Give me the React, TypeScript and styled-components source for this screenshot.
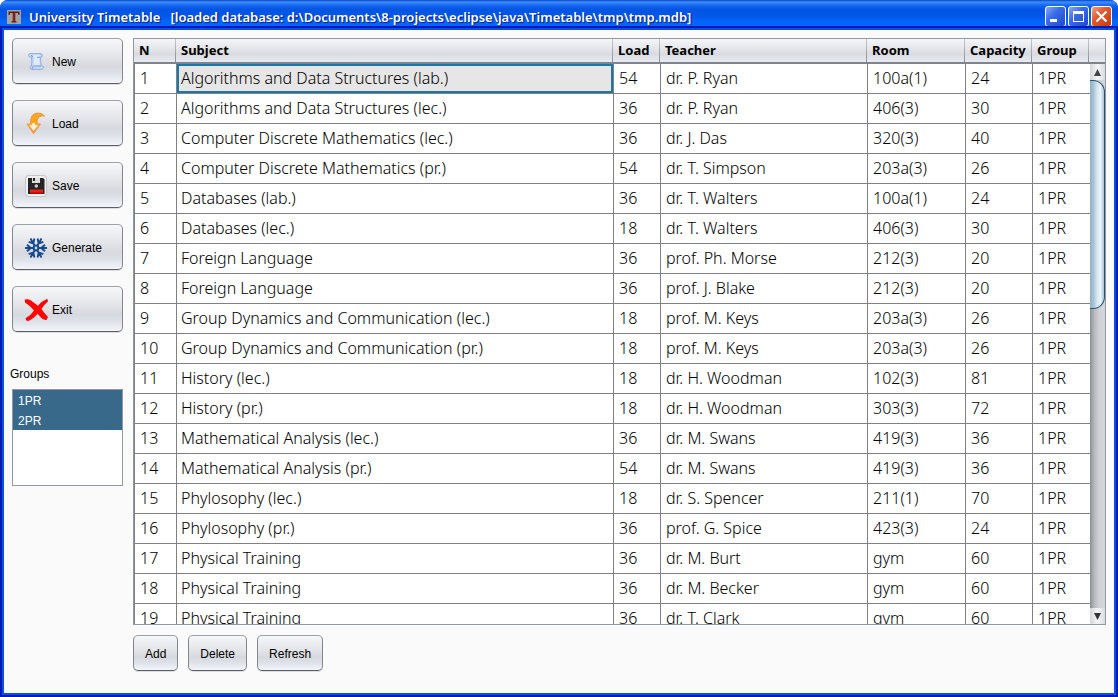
import React from "react";
import styled, { createGlobalStyle, css } from "styled-components";

const GlobalStyle = createGlobalStyle`
  * { box-sizing: border-box; }
  body { margin: 0; background: #fff; }
  button, select { font: inherit; color: inherit; }
`;

const uiFont = `"Liberation Sans", Arial, sans-serif`;
const tableFont = `"Noto Sans", Tahoma, sans-serif`;

const Window = styled.div`
  display: flex;
  flex-direction: column;
  height: 100vh;
  min-height: 560px;
  overflow: hidden;
  border-radius: 8px 8px 0 0;
  background: #0a41dc;
  font: 12px/16px ${uiFont};
  color: #000;
`;

const TitleBar = styled.header`
  display: flex;
  align-items: center;
  flex: none;
  gap: 8px;
  height: 30px;
  padding: 3px 6px 0 7px;
  background: linear-gradient(
    #0843c8 0,
    #3d8ffb 2px,
    #1a6af2 5px,
    #0355e3 9px,
    #0257e8 16px,
    #0466fc 22px,
    #0566ff 26px,
    #0355e4 28px,
    #003dce 30px
  );
`;

const Title = styled.h1`
  flex: 1;
  margin: 0;
  overflow: hidden;
  white-space: pre;
  font: 600 13px/16px ${tableFont};
  color: #fff;
  text-shadow: 1px 1px 1px #0a1883;
`;

const Controls = styled.div`
  display: flex;
  gap: 2px;
`;

const ControlButton = styled.button<{ $close?: boolean }>`
  display: block;
  width: 21px;
  height: 21px;
  padding: 0;
  border: 1px solid #fff;
  border-radius: 3px;
  background: ${(p) =>
    p.$close
      ? "linear-gradient(135deg, #f0a088, #e4582f 40%, #c93a0c)"
      : "linear-gradient(135deg, #8aa9f5, #3a6be8 40%, #1b4bd2)"};
  svg { display: block; }
`;

const Frame = styled.main`
  display: flex;
  flex: 1;
  min-height: 0;
  gap: 10px;
  margin: 0 4px 4px;
  padding: 8px 8px 22px;
  background: #fafafa;
  box-shadow: 0 0 0 2px #0b4ee6, 0 0 0 4px #001cb5;
`;

const Sidebar = styled.aside`
  display: flex;
  flex-direction: column;
  flex: none;
  width: 111px;
`;

const Toolbar = styled.div`
  display: flex;
  flex-direction: column;
  gap: 16px;
`;

const raised = css`
  border: 1px solid;
  border-color: #9fa1a8 #84868e #5c5e68;
  border-radius: 5px;
  background: linear-gradient(#f6f7f9, #e3e5e9 40%, #d7d9df 62%, #dcdfe6 76%, #f3f5fb);
  box-shadow: 0 1px 0 #dcdde0;
`;

const ToolButton = styled.button`
  ${raised}
  display: flex;
  align-items: center;
  gap: 4px;
  height: 46px;
  padding: 1px 11px 0;
  svg { flex: none; }
`;

const ListLabel = styled.label`
  margin: 34px 0 7px -2px;
`;

const GroupList = styled.select`
  height: 97px;
  padding: 0;
  overflow: hidden;
  border: 1px solid #9297a1;
  border-radius: 0;
  outline: none;
  background: #fff;
  option {
    min-height: 20px;
    padding: 4px 5px 0;
    line-height: 16px;
  }
  option:checked {
    background: #39698a linear-gradient(#39698a, #39698a);
    color: #fff;
    -webkit-text-fill-color: #fff;
  }
`;

const Content = styled.section`
  display: flex;
  flex: 1;
  flex-direction: column;
  min-width: 0;
  gap: 10px;
`;

const GridPanel = styled.div`
  display: flex;
  flex: 1;
  min-height: 0;
  overflow: hidden;
  border: 1px solid #9297a1;
  background: #fff;
`;

const Viewport = styled.div`
  flex: 1;
  min-width: 0;
  overflow: hidden;
`;

const headFill = css`
  height: 25px;
  border-bottom: 2px solid #80838b;
  background: linear-gradient(#f5f6f8, #e2e4e8 45%, #d9dbe0 65%, #e8ebf2);
`;

const Table = styled.table`
  width: 100%;
  table-layout: fixed;
  border-collapse: separate;
  border-spacing: 0;
  font: 16px/20px ${tableFont};
  white-space: nowrap;
`;

const Column = styled.col<{ $width?: number }>`
  width: ${(p) => (p.$width ? `${p.$width}px` : "auto")};
`;

const HeadCell = styled.th`
  ${headFill}
  padding: 0 4px 2px;
  background:
    linear-gradient(#c4c6cc, #8c8f98) right 1px top / 1px 100% no-repeat,
    linear-gradient(#f5f6f8, #e2e4e8 45%, #d9dbe0 65%, #e8ebf2);
  font: bold 13px/20px ${tableFont};
  text-align: left;
  &:first-child { padding-left: 5px; }
`;

const Cell = styled.td<{ $selected?: boolean }>`
  height: 30px;
  padding: 0 4px 2px;
  overflow: hidden;
  border-right: 1px solid #808080;
  border-bottom: 1px solid #808080;
  font-weight: 300;
  &:first-child {
    padding-left: 5px;
    border-left: 1px solid #808080;
  }
  &:nth-child(n + 3) { padding-left: 5px; }
  &:last-child { border-right: 0; }
  ${(p) =>
    p.$selected &&
    css`
      background: #e6e6e6;
      box-shadow: inset 0 0 0 2px #1f77a6;
    `}
`;

const ScrollRail = styled.div`
  display: flex;
  flex: none;
  flex-direction: column;
  width: 15px;
`;

const ScrollCorner = styled.div`
  ${headFill}
  flex: none;
`;

const ScrollArrow = styled.button`
  display: flex;
  align-items: center;
  justify-content: center;
  flex: none;
  height: 16px;
  padding: 0;
  border: 0;
  background: linear-gradient(90deg, #d4d6db, #f4f5f7 50%, #d9dbe0);
`;

const ScrollTrack = styled.div`
  flex: 1;
  background: linear-gradient(90deg, #8c8f96, #b8bac0 30%, #d0d2d7 60%, #d4d6db);
`;

const ScrollThumb = styled.div`
  height: 45%;
  max-height: 229px;
  border: 1px solid #2a5070;
  border-left: 0;
  border-radius: 0 12px 12px 0;
  background: linear-gradient(90deg, #8fb0c8, #a9c3d5 25%, #d5e5ef 50%, #e9f5fb 75%, #a8c4d6);
`;

const Actions = styled.div`
  display: flex;
  gap: 10px;
`;

const ActionButton = styled.button`
  ${raised}
  height: 36px;
  padding: 1px 11px 0;
`;

const AppIcon = () => (
  <svg width="14" height="14" viewBox="0 0 14 14" aria-hidden="true">
    <path fill="#a3a39f" d="M0 0h14v14H0z" />
    <path fill="#5c1d1b" d="M1.500 1.500h11V5h-1L10.800 3H8.300v8l1.200.6v.9h-5v-.9l1.200-.6V3H3.200L2.500 5h-1z" />
    <path fill="#96201e" d="M6 3h1.500v8.500H6z" />
  </svg>
);

const ScrollIcon = () => (
  <svg width="24" height="24" viewBox="0 0 24 24" aria-hidden="true">
    <path
      d="M6 3.500h10q2.600 0 2.500 2.200-.2 1.500-2 1.600 0 4 .8 8.200 2.200.2 2.200 1.800t-2 2.200H8.500Q5.500 19.500 6 17.500q.3-1 1.300-1.200Q8.300 11 7.500 7.300 4.500 7.500 4.500 5.400 4.600 3.700 6 3.500z"
      fill="#c3d6f3"
      stroke="#94b0de"
    />
    <path d="M9.500 5h6v10.500h-6q1-5 0-10.500z" fill="#dfeafa" />
    <path d="M7 5.500q1.800 0 1.500 1.800M8.500 16.500q1 1.500-.5 2.500M9 16h8M13 7.300h3.500" fill="none" stroke="#7d9ed4" />
  </svg>
);

const LoadIcon = () => (
  <svg width="24" height="24" viewBox="0 0 24 24" aria-hidden="true">
    <defs>
      <linearGradient id="load-fill" x1="0" y1="0" x2="0" y2="1">
        <stop offset="0" stopColor="#f4a63a" />
        <stop offset=".4" stopColor="#fca50f" />
        <stop offset=".65" stopColor="#fdb544" />
        <stop offset="1" stopColor="#f58a28" />
      </linearGradient>
    </defs>
    <path
      d="M20.500 4Q18 .7 13 1 7.500 2 6.800 7.500L6.500 12H3l6.500 9.500 7-9.500H13Q12.500 8 14.500 5.500 17 3.200 20.500 4z"
      fill="url(#load-fill)"
      stroke="#ee9440"
      strokeLinejoin="round"
    />
    <path d="M5.500 13.200h2.500l.5-2.200h2.300l.5 2.200h2.700L9.600 19z" fill="#fff" opacity=".8" />
  </svg>
);

const SaveIcon = () => (
  <svg width="24" height="24" viewBox="0 0 24 24" aria-hidden="true">
    <rect x="1" y="1" width="22" height="22" rx="4" fill="#c6c6c8" />
    <rect x="2" y="2" width="20" height="20" rx="3" fill="#efefef" />
    <path d="M4 4h15l1.500 1.500V20H4z" fill="#252525" />
    <path d="M8 4h8v5H8z" fill="#ddd" />
    <path d="M9 4h2v3H9z" fill="#222" />
    <circle cx="12.300" cy="12" r="1.800" fill="#ccc" />
    <path d="M6 15.500h13V20H6z" fill="#f01c16" />
    <path d="M6 18.500h13V20H6z" fill="#a90b08" />
  </svg>
);

const SnowflakeIcon = () => (
  <svg width="24" height="24" viewBox="0 0 24 24" aria-hidden="true">
    <g fill="none" stroke="#17498f" strokeWidth="1.900">
      {[30, 90, 150, 210, 270, 330].map((angle) => (
        <path key={angle} d="M12 12V1M8.700 3l3.300 3.800L15.300 3" transform={`rotate(${angle} 12 12)`} />
      ))}
    </g>
    <circle cx="12" cy="12" r="2.800" fill="none" stroke="#17498f" strokeWidth="1.200" />
    <circle cx="12" cy="12" r="1.400" fill="#c3d5ec" />
  </svg>
);

const CrossIcon = () => (
  <svg width="24" height="24" viewBox="0 0 24 24" aria-hidden="true">
    <path
      d="M.7 1.500Q4 .5 7 2.500l7 5.200Q18 3 23.300.8l.7 2.700Q19.500 7 17.500 11q3 4.500 6.500 8l-1.500 3q-3.500.5-6-3l-2.800-3.200Q10 20.500 4.500 23l-2.300-.5-.7-2.300Q7 17.500 10 12.500 6 7.500 1 4.500z"
      fill="#fb0505"
    />
  </svg>
);

const subjects: { subject: string; load: number; teacher: string; room: string; capacity: number }[] = [
  { subject: "Algorithms and Data Structures (lab.)", load: 54, teacher: "dr. P. Ryan", room: "100a(1)", capacity: 24 },
  { subject: "Algorithms and Data Structures (lec.)", load: 36, teacher: "dr. P. Ryan", room: "406(3)", capacity: 30 },
  { subject: "Computer Discrete Mathematics (lec.)", load: 36, teacher: "dr. J. Das", room: "320(3)", capacity: 40 },
  { subject: "Computer Discrete Mathematics (pr.)", load: 54, teacher: "dr. T. Simpson", room: "203a(3)", capacity: 26 },
  { subject: "Databases (lab.)", load: 36, teacher: "dr. T. Walters", room: "100a(1)", capacity: 24 },
  { subject: "Databases (lec.)", load: 18, teacher: "dr. T. Walters", room: "406(3)", capacity: 30 },
  { subject: "Foreign Language", load: 36, teacher: "prof. Ph. Morse", room: "212(3)", capacity: 20 },
  { subject: "Foreign Language", load: 36, teacher: "prof. J. Blake", room: "212(3)", capacity: 20 },
  { subject: "Group Dynamics and Communication (lec.)", load: 18, teacher: "prof. M. Keys", room: "203a(3)", capacity: 26 },
  { subject: "Group Dynamics and Communication (pr.)", load: 18, teacher: "prof. M. Keys", room: "203a(3)", capacity: 26 },
  { subject: "History (lec.)", load: 18, teacher: "dr. H. Woodman", room: "102(3)", capacity: 81 },
  { subject: "History (pr.)", load: 18, teacher: "dr. H. Woodman", room: "303(3)", capacity: 72 },
  { subject: "Mathematical Analysis (lec.)", load: 36, teacher: "dr. M. Swans", room: "419(3)", capacity: 36 },
  { subject: "Mathematical Analysis (pr.)", load: 54, teacher: "dr. M. Swans", room: "419(3)", capacity: 36 },
  { subject: "Phylosophy (lec.)", load: 18, teacher: "dr. S. Spencer", room: "211(1)", capacity: 70 },
  { subject: "Phylosophy (pr.)", load: 36, teacher: "prof. G. Spice", room: "423(3)", capacity: 24 },
  { subject: "Physical Training", load: 36, teacher: "dr. M. Burt", room: "gym", capacity: 60 },
  { subject: "Physical Training", load: 36, teacher: "dr. M. Becker", room: "gym", capacity: 60 },
  { subject: "Physical Training", load: 36, teacher: "dr. T. Clark", room: "gym", capacity: 60 },
];

const columns: { title: string; width?: number }[] = [
  { title: "N", width: 43 },
  { title: "Subject" },
  { title: "Load", width: 47 },
  { title: "Teacher", width: 207 },
  { title: "Room", width: 98 },
  { title: "Capacity", width: 67 },
  { title: "Group", width: 57 },
];

const tools = [
  { label: "New", Icon: ScrollIcon },
  { label: "Load", Icon: LoadIcon },
  { label: "Save", Icon: SaveIcon },
  { label: "Generate", Icon: SnowflakeIcon },
  { label: "Exit", Icon: CrossIcon },
];

export default function App() {
  return (
    <>
      <GlobalStyle />
      <Window>
        <TitleBar>
          <AppIcon />
          <Title>
            {"University Timetable   [loaded database: d:\\Documents\\8-projects\\eclipse\\java\\Timetable\\tmp\\tmp.mdb]"}
          </Title>
          <Controls>
            <ControlButton aria-label="Minimize">
              <svg width="19" height="19" viewBox="0 0 19 19"><path fill="#fff" d="M4 12h7v3H4z" /></svg>
            </ControlButton>
            <ControlButton aria-label="Maximize">
              <svg width="19" height="19" viewBox="0 0 19 19">
                <path fill="#fff" fillRule="evenodd" d="M4 4h11v11H4zM5 7v7h9V7z" />
              </svg>
            </ControlButton>
            <ControlButton aria-label="Close" $close>
              <svg width="19" height="19" viewBox="0 0 19 19">
                <path stroke="#fff" strokeWidth="2.200" d="M4.500 4.500l10 10M14.500 4.500l-10 10" />
              </svg>
            </ControlButton>
          </Controls>
        </TitleBar>
        <Frame>
          <Sidebar>
            <Toolbar>
              {tools.map(({ label, Icon }) => (
                <ToolButton key={label}>
                  <Icon />
                  {label}
                </ToolButton>
              ))}
            </Toolbar>
            <ListLabel htmlFor="groups">Groups</ListLabel>
            <GroupList id="groups" multiple defaultValue={["1PR", "2PR"]}>
              <option>1PR</option>
              <option>2PR</option>
            </GroupList>
          </Sidebar>
          <Content>
            <GridPanel>
              <Viewport>
                <Table>
                  <colgroup>
                    {columns.map((c) => <Column key={c.title} $width={c.width} />)}
                  </colgroup>
                  <thead>
                    <tr>{columns.map((c) => <HeadCell key={c.title} scope="col">{c.title}</HeadCell>)}</tr>
                  </thead>
                  <tbody>
                    {subjects.map((row, i) => (
                      <tr key={i}>
                        <Cell>{i + 1}</Cell>
                        <Cell $selected={i === 0}>{row.subject}</Cell>
                        <Cell>{row.load}</Cell>
                        <Cell>{row.teacher}</Cell>
                        <Cell>{row.room}</Cell>
                        <Cell>{row.capacity}</Cell>
                        <Cell>1PR</Cell>
                      </tr>
                    ))}
                  </tbody>
                </Table>
              </Viewport>
              <ScrollRail>
                <ScrollCorner />
                <ScrollArrow aria-label="Scroll up">
                  <svg width="7" height="7" viewBox="0 0 7 7"><path fill="#444" d="M3.500 0L7 7H0z" /></svg>
                </ScrollArrow>
                <ScrollTrack>
                  <ScrollThumb />
                </ScrollTrack>
                <ScrollArrow aria-label="Scroll down">
                  <svg width="7" height="7" viewBox="0 0 7 7"><path fill="#333" d="M3.500 7L7 0H0z" /></svg>
                </ScrollArrow>
              </ScrollRail>
            </GridPanel>
            <Actions>
              <ActionButton>Add</ActionButton>
              <ActionButton>Delete</ActionButton>
              <ActionButton>Refresh</ActionButton>
            </Actions>
          </Content>
        </Frame>
      </Window>
    </>
  );
}
